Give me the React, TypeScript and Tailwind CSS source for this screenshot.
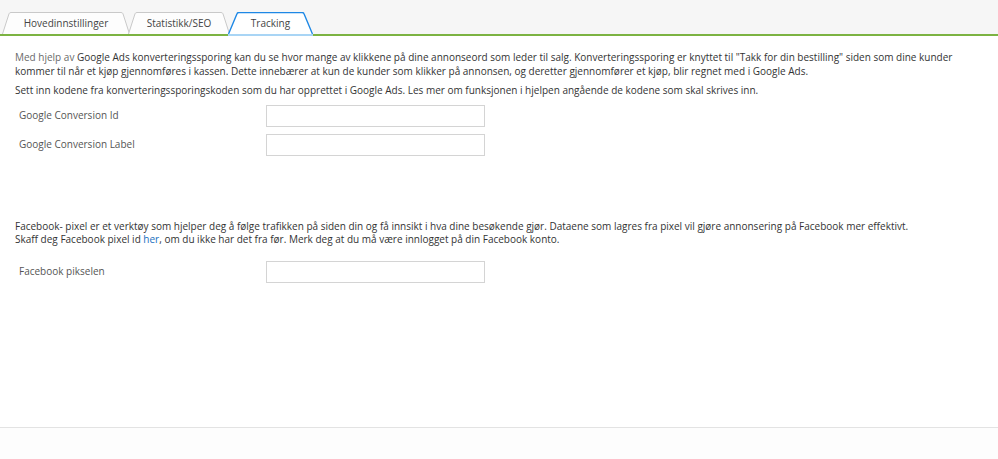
import React from "react";

function Tab({ label, width, active, ml, slope = 7 }: { label: string; width: number; active?: boolean; ml?: string; slope?: number }) {
  const w = width;
  const s = slope;
  const d = `M0.5,22 L${s},1.8 Q${s + 0.5},0.5 ${s + 2},0.5 L${w - s - 2},0.5 Q${w - s - 0.5},0.5 ${w - s},1.8 L${w - 0.5},22`;
  return (
    <div className={`relative h-[22px] flex items-center justify-center ${ml ?? ""}`} style={{ width: w }}>
      <svg className="absolute inset-0" width={w} height={22} viewBox={`0 0 ${w} 22`}>
        <path d={d + " Z"} fill={active ? "#ffffff" : "#fdfdfd"} stroke="none" />
        <path d={d} fill="none" stroke={active ? "#1e88e5" : "#c9c9c9"} strokeWidth={active ? 1.4 : 1} />
      </svg>
      <span className="relative text-[10px] text-[#444] leading-none">{label}</span>
    </div>
  );
}

export default function App() {
  return (
    <div className="w-[998px] h-[459px] bg-white flex flex-col" style={{ fontFamily: '"Open Sans", "Noto Sans", sans-serif' }}>
      <div className="bg-[#f6f6f6] pt-[12px] relative">
        <div className="flex items-end pl-[2px]">
          <Tab label="Hovedinnstillinger" width={128} />
          <Tab label="Statistikk/SEO" width={102} ml="-ml-[2px]" />
          <Tab label="Tracking" width={85} active slope={9} ml="-ml-[2px]" />
        </div>
        <div className="h-[2px] bg-[#7cb342] flex">
          <div className="ml-[228px] w-[85px] h-[2px] bg-[#a9d5f5]" />
        </div>
      </div>
      <div className="flex-1 px-[15px] pt-[15px] text-[10px] leading-[13.5px] text-[#333]">
        <p>
          <span className="text-[#6a6a6a]">Med hjelp av</span> Google Ads konverteringssporing kan du se hvor mange av klikkene på dine annonseord som leder til salg. Konverteringssporing er knyttet til "Takk for din bestilling" siden som dine kunder kommer til når et kjøp gjennomføres i kassen. Dette innebærer at kun de kunder som klikker på annonsen, og deretter gjennomfører et kjøp, blir regnet med i Google Ads.
        </p>
        <p className="mt-[6px]">
          Sett inn kodene fra konverteringssporingskoden som du har opprettet i Google Ads. Les mer om funksjonen i hjelpen angående de kodene som skal skrives inn.
        </p>
        <div className="mt-[7px] flex flex-col gap-[7px]">
          <div className="flex items-center">
            <label className="w-[251px] pl-[4px] text-[#555]">Google Conversion Id</label>
            <input className="w-[219px] h-[22px] border border-[#d4d4d4] bg-white outline-none" />
          </div>
          <div className="flex items-center">
            <label className="w-[251px] pl-[4px] text-[#555]">Google Conversion Label</label>
            <input className="w-[219px] h-[22px] border border-[#d4d4d4] bg-white outline-none" />
          </div>
        </div>
        <p className="mt-[64px]">
          Facebook- pixel er et verktøy som hjelper deg å følge trafikken på siden din og få innsikt i hva dine besøkende gjør. Dataene som lagres fra pixel vil gjøre annonsering på Facebook mer effektivt.
          <br />
          Skaff deg Facebook pixel id <a className="text-[#1a6fc0]" href="#">her</a>, om du ikke har det fra før. Merk deg at du må være innlogget på din Facebook konto.
        </p>
        <div className="mt-[14px] flex items-center">
          <label className="w-[251px] pl-[4px] text-[#555]">Facebook pikselen</label>
          <input className="w-[219px] h-[22px] border border-[#d4d4d4] bg-white outline-none" />
        </div>
      </div>
      <div className="h-[32px] border-t border-[#e3e3e3] bg-[#fdfdfd]" />
    </div>
  );
}
